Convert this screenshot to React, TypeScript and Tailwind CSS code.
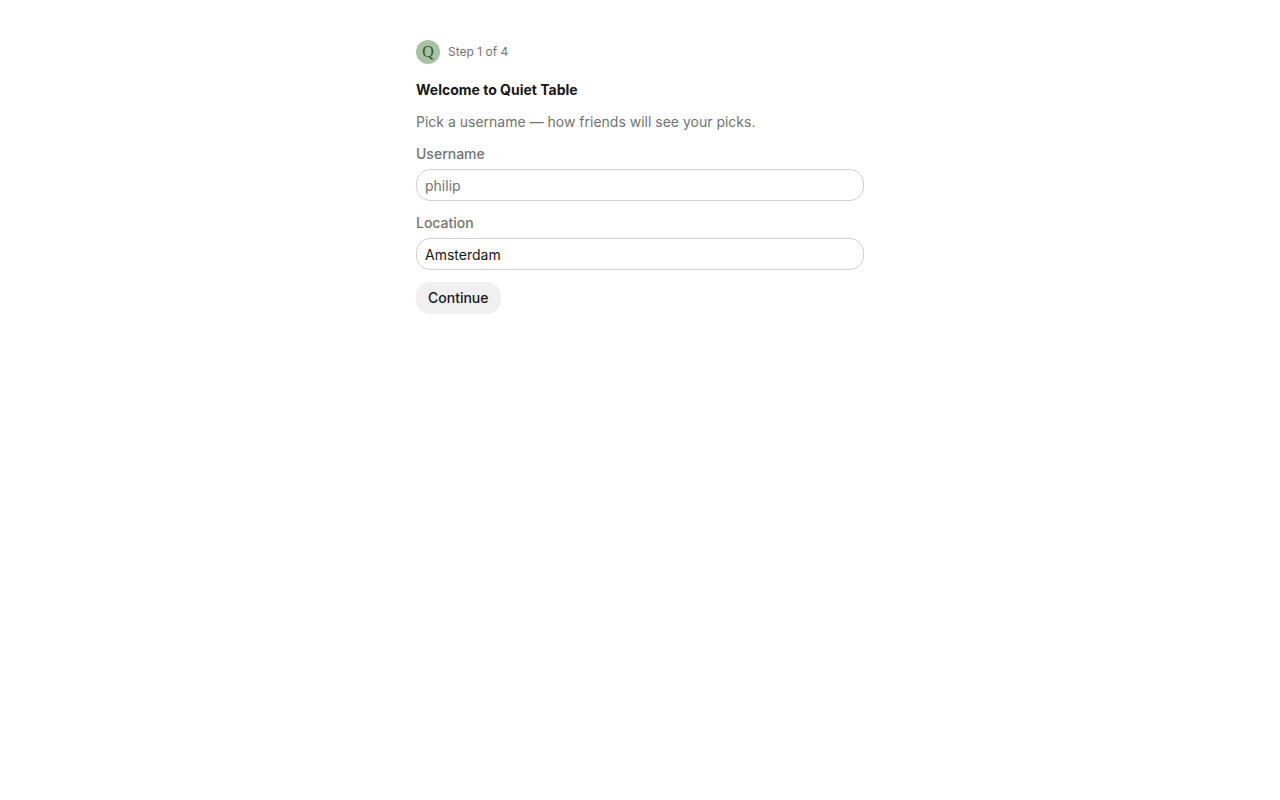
import { useState } from "react";

function Field({
  id,
  label,
  value,
  placeholder,
  onChange,
}: {
  id: string;
  label: string;
  value: string;
  placeholder?: string;
  onChange: (v: string) => void;
}) {
  return (
    <div className="flex flex-col gap-[5px]">
      <label htmlFor={id} className="text-sm font-medium text-[#737373]">
        {label}
      </label>
      <input
        id={id}
        type="text"
        className="h-8 w-full rounded-[14px] border border-[#d0d0d0] bg-white px-2 text-sm text-[#171717] outline-none placeholder:text-[#737373] focus:border-[#a3a3a3]"
        placeholder={placeholder}
        value={value}
        onChange={(e) => onChange(e.target.value)}
      />
    </div>
  );
}

export default function App() {
  const [username, setUsername] = useState("");
  const [location, setLocation] = useState("Amsterdam");

  return (
    <main className="mx-auto flex max-w-lg flex-col gap-3 px-8 py-10 font-['Inter',sans-serif] text-[#171717]">
      <div className="flex items-center gap-2">
        <span className="flex size-6 items-center justify-center rounded-full bg-[#a8c3a0] font-['Liberation_Serif',serif] text-base leading-none text-[#34502f]">
          Q
        </span>
        <span className="text-xs text-[#737373]">Step 1 of 4</span>
      </div>

      <form className="mt-1 flex flex-col gap-3" onSubmit={(e) => e.preventDefault()}>
        <h1 className="text-sm font-bold">Welcome to Quiet Table</h1>
        <p className="text-sm text-[#737373]">Pick a username — how friends will see your picks.</p>

        <Field id="username" label="Username" placeholder="philip" value={username} onChange={setUsername} />
        <Field id="location" label="Location" value={location} onChange={setLocation} />

        <button type="submit" className="h-8 self-start rounded-[14px] bg-[#f0f0f0] px-3 text-sm font-medium">
          Continue
        </button>
      </form>
    </main>
  );
}
